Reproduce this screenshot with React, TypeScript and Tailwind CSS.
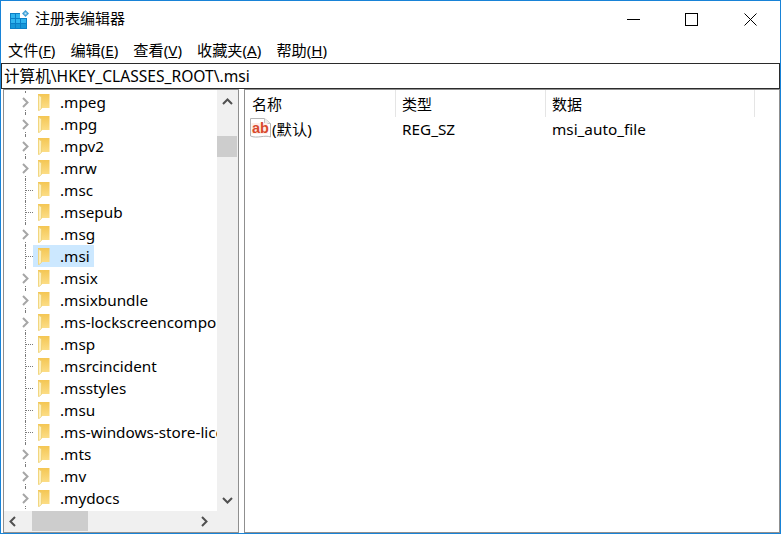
import React from 'react';

const FONT = "font-['Noto_Sans','Noto_Sans_CJK_SC',sans-serif]";

type Node = { name: string; expand: boolean; selected?: boolean };

const nodes: Node[] = [
    { name: '.mpeg', expand: true },
    { name: '.mpg', expand: true },
    { name: '.mpv2', expand: true },
    { name: '.mrw', expand: true },
    { name: '.msc', expand: false },
    { name: '.msepub', expand: false },
    { name: '.msg', expand: true },
    { name: '.msi', expand: false, selected: true },
    { name: '.msix', expand: true },
    { name: '.msixbundle', expand: true },
    { name: '.ms-lockscreencomponent', expand: true },
    { name: '.msp', expand: false },
    { name: '.msrcincident', expand: false },
    { name: '.msstyles', expand: false },
    { name: '.msu', expand: false },
    { name: '.ms-windows-store-license', expand: false },
    { name: '.mts', expand: true },
    { name: '.mv', expand: true },
    { name: '.mydocs', expand: true },
];

const menus = [
    ['文件(', 'F'],
    ['编辑(', 'E'],
    ['查看(', 'V'],
    ['收藏夹(', 'A'],
    ['帮助(', 'H'],
];

const RegIcon = () => (
    <svg width="19" height="19" viewBox="0 0 19 19" className="shrink-0">
        <rect x="0" y="3" width="17" height="16" fill="#0b7fc7" />
        <g fill="#2fb4ef">
            <rect x="1" y="4" width="4" height="4" />
            <rect x="6" y="4" width="4" height="4" />
            <rect x="1" y="9" width="4" height="4" />
            <rect x="6" y="9" width="4" height="4" />
            <rect x="11" y="9" width="5" height="4" />
        </g>
        <g fill="#1596d8">
            <rect x="1" y="14" width="4" height="4" />
            <rect x="6" y="14" width="4" height="4" />
            <rect x="11" y="14" width="5" height="4" />
        </g>
        <rect x="10" y="3" width="7" height="5" fill="#fff" />
        <path d="M15.5 0 L19 3.5 L15.5 7 L12 3.5 Z" fill="#3f9fd6" />
        <rect x="14.5" y="2.5" width="2" height="2" fill="#c4e8f8" />
    </svg>
);

const Folder = () => (
    <svg width="12" height="17" viewBox="0 0 12 17" className="shrink-0">
        <defs>
            <linearGradient id="folderBody" x1="0" y1="0" x2="0" y2="1">
                <stop offset="0" stopColor="#f4c653" />
                <stop offset="1" stopColor="#fde08c" />
            </linearGradient>
        </defs>
        <path d="M0 0 H11.5 V14 H2 V16 H0 Z" fill="url(#folderBody)" />
        <path d="M0.4 1 L3.5 3 V14.5 L1 16.6 H0.4 Z" fill="#fdf0bd" stroke="#eccb6c" strokeWidth="0.7" />
    </svg>
);

const Chevron = ({ dir }: { dir: 'right' | 'left' | 'up' | 'down' }) => {
    const d = {
        right: 'M1 1 L5.5 5.5 L1 10',
        left: 'M6 1 L1.5 5.5 L6 10',
        up: 'M1 6 L5.5 1.5 L10 6',
        down: 'M1 1 L5.5 5.5 L10 1',
    }[dir];
    const size = dir === 'left' || dir === 'right' ? 'w-[7px] h-[11px]' : 'w-[11px] h-[7px]';
    const box = dir === 'left' || dir === 'right' ? '0 0 7 11' : '0 0 11 7';
    return (
        <svg viewBox={box} className={size}>
            <path d={d} fill="none" stroke="currentColor" strokeWidth="2" />
        </svg>
    );
};

const TreeRow = ({ node }: { node: Node }) => (
    <div className="flex h-[22px] items-center shrink-0 whitespace-nowrap">
        <div className="relative w-[29px] h-full shrink-0 text-[#a6a6a6]">
            <div className="absolute left-[21px] top-0 h-full border-l border-dotted border-[#7a7a7a]" />
            {node.expand ? (
                <div className="absolute left-[18px] top-[3px] h-[16px] w-[7px] pt-[3px] bg-white flex justify-center">
                    <Chevron dir="right" />
                </div>
            ) : (
                <div className="absolute left-[21px] top-[11px] w-[8px] border-t border-dotted border-[#7a7a7a]" />
            )}
        </div>
        <div className={`flex h-full items-center ${node.selected ? 'bg-[#cce8ff]' : ''}`}>
            <div className="pl-[5px] pr-[10px] flex items-center">
                <Folder />
            </div>
            <span className="text-[15.3px] leading-[22px] text-black pr-[4px]">{node.name}</span>
        </div>
    </div>
);

const App: React.FC = () =>
{
    return (
        <div className={`${FONT} w-[781px] h-[534px] bg-white border border-[#1883d7] flex flex-col overflow-hidden text-black`}>
            {/* Заголовок */}
            <div className="flex h-[38px] shrink-0 items-center pl-[9px] pb-[2px]">
                <RegIcon />
                <span className="ml-[6px] mb-[2px] text-[15px]">注册表编辑器</span>
                <div className="ml-auto flex items-center">
                    <div className="w-[13px] h-px bg-black" />
                    <div className="ml-[45px] w-[13px] h-[13px] border border-black" />
                    <svg width="13" height="13" viewBox="0 0 13 13" className="ml-[46px] mr-[23px]">
                        <path d="M0.5 0.5 L12.5 12.5 M12.5 0.5 L0.5 12.5" stroke="#000" strokeWidth="1" />
                    </svg>
                </div>
            </div>

            {/* Меню */}
            <div className="flex h-[24px] shrink-0 items-center pl-[7px] pb-[2px] gap-[15px] text-[15.2px]">
                {menus.map(([label, key]) => (
                    <span key={key}>
                        {label}
                        <span className="underline">{key}</span>)
                    </span>
                ))}
            </div>

            {/* Адрес */}
            <div className="h-[26px] shrink-0 border border-[#2b2b2b] flex items-center pl-[2px] pt-[2px] text-[15.6px] bg-white">
                计算机\HKEY_CLASSES_ROOT\.msi
            </div>

            {/* Панели */}
            <div className="flex flex-1 min-h-0 pl-[2px]">
                <div className="w-[236px] shrink-0 flex flex-col border border-[#8f8f8f]">
                    <div className="flex flex-1 min-h-0">
                        <div className="flex-1 min-w-0 flex flex-col overflow-hidden pt-px">
                            {nodes.map((n) => (
                                <TreeRow key={n.name} node={n} />
                            ))}
                        </div>
                        <div className="w-[21px] shrink-0 bg-[#f0f0f0] flex flex-col text-[#505050]">
                            <div className="w-[20px] h-[22px] flex items-center justify-center"><Chevron dir="up" /></div>
                            <div className="w-[20px] h-[21px] mt-[24px] bg-[#cdcdcd]" />
                            <div className="w-[20px] mt-auto h-[22px] flex items-center justify-center"><Chevron dir="down" /></div>
                        </div>
                    </div>
                    <div className="h-[21px] shrink-0 flex bg-[#f0f0f0] text-[#505050]">
                        <div className="w-[28px] flex items-center pl-[5px] pb-px"><Chevron dir="left" /></div>
                        <div className="w-[56px] h-[20px] bg-[#cdcdcd]" />
                        <div className="flex-1 flex items-center justify-end pr-[30px] pb-px"><Chevron dir="right" /></div>
                    </div>
                </div>
                <div className="w-[5px] shrink-0" />
                <div className="flex-1 border border-[#8f8f8f] flex flex-col min-w-0">
                    <div className="flex h-[27px] shrink-0 text-[15px] items-center">
                        <div className="w-[151px] pl-[7px] pt-[2px] h-full flex items-center border-r border-[#e5e5e5]">名称</div>
                        <div className="w-[150px] pl-[6px] pt-[2px] h-full flex items-center border-r border-[#e5e5e5]">类型</div>
                        <div className="w-[209px] pl-[6px] pt-[2px] h-full flex items-center border-r border-[#e5e5e5]">数据</div>
                    </div>
                    <div className="flex h-[23px] shrink-0 items-center text-[15.3px]">
                        <div className="w-[151px] pl-[5px] flex items-center gap-px">
                            <svg width="21" height="21" viewBox="0 0 21 21" className="shrink-0">
                                <path d="M0.5 0.5 H14.5 L20.5 5.5 V19 C15 16.5 7 21 0.5 18 Z" fill="#fff" stroke="#b4b4b4" />
                                <path d="M14.5 0.5 V5.5 H20.5" fill="#ececec" stroke="#c4c4c4" />
                                <rect x="1.5" y="5" width="16" height="11" fill="#fdeee9" />
                                <text x="2" y="15" fontSize="14.5" fontWeight="700" fill="#d8492c" fontFamily="Liberation Sans, sans-serif">ab</text>
                            </svg>
                            <span className="pt-[2px]">(默认)</span>
                        </div>
                        <div className="w-[150px] pl-[6px] pt-[2px]">REG_SZ</div>
                        <div className="pl-[6px] pt-[2px]">msi_auto_file</div>
                    </div>
                </div>
            </div>
        </div>
    );
};

export default App;
